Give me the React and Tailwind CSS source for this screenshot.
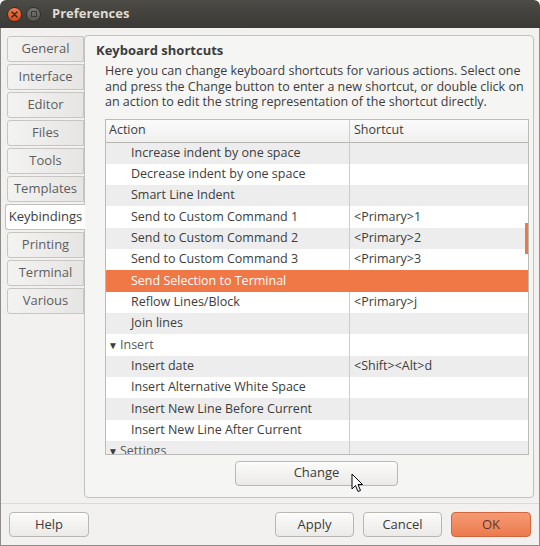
import React from "react";

const tabs = ["General", "Interface", "Editor", "Files", "Tools", "Templates", "Keybindings", "Printing", "Terminal", "Various"];

const rows = [
    { a: "Increase indent by one space", s: "" },
    { a: "Decrease indent by one space", s: "" },
    { a: "Smart Line Indent", s: "" },
    { a: "Send to Custom Command 1", s: "<Primary>1" },
    { a: "Send to Custom Command 2", s: "<Primary>2" },
    { a: "Send to Custom Command 3", s: "<Primary>3" },
    { a: "Send Selection to Terminal", s: "", selected: true },
    { a: "Reflow Lines/Block", s: "<Primary>j" },
    { a: "Join lines", s: "" },
    { a: "Insert", s: "", group: true },
    { a: "Insert date", s: "<Shift><Alt>d" },
    { a: "Insert Alternative White Space", s: "" },
    { a: "Insert New Line Before Current", s: "" },
    { a: "Insert New Line After Current", s: "" },
    { a: "Settings", s: "", group: true },
];

function Button({ children, className = "" }) {
    return (
        <button
            className={
                "h-[25px] rounded-[4px] border border-[#b9b7b3] bg-gradient-to-b from-[#fbfbfa] to-[#ebeae8] text-[13px] text-[#3c3c3c] shadow-[inset_0_1px_0_#fff] " +
                className
            }
        >
            {children}
        </button>
    );
}

export default function App() {
    return (
        <div
            className="w-[540px] h-[546px] flex flex-col bg-white overflow-hidden"
            style={{ fontFamily: '"Open Sans", "Noto Sans", sans-serif' }}
        >
            {/* Title bar */}
            <div className="h-[28px] shrink-0 flex items-center rounded-t-[6px] bg-gradient-to-b from-[#4c4b46] to-[#3a3935] px-[7px]">
                <div className="w-[15px] h-[15px] rounded-full bg-gradient-to-b from-[#f37b4c] to-[#d8491b] border border-[#2e2d2a] flex items-center justify-center">
                    <svg width="7" height="7" viewBox="0 0 7 7">
                        <path d="M1 1 L6 6 M6 1 L1 6" stroke="#3a2a22" strokeWidth="1.6" strokeLinecap="round" />
                    </svg>
                </div>
                <div className="ml-[4px] w-[15px] h-[15px] rounded-full bg-gradient-to-b from-[#7a7974] to-[#55544f] border border-[#2e2d2a] flex items-center justify-center">
                    <div className="w-[6px] h-[6px] border border-[#3a3935]" />
                </div>
                <span className="ml-[11px] text-[13px] font-bold text-[#dfdbd2]">Preferences</span>
            </div>

            {/* Body */}
            <div className="flex-1 flex flex-col bg-[#f2f1f0] border-x border-b border-[#8d8c88]">
                <div className="flex pt-[7px] pr-[5px]">
                    {/* Tabs */}
                    <div className="w-[83px] shrink-0 flex flex-col gap-[2px] pt-[1px] pl-[4px] relative z-10">
                        {tabs.map((t) =>
                            t === "Keybindings" ? (
                                <div
                                    key={t}
                                    className="h-[26px] w-[80px] -mr-[1px] flex items-center justify-center rounded-l-[3px] border border-r-0 border-[#c3c1bd] bg-white text-[13px] text-[#3c3c3c]"
                                >
                                    {t}
                                </div>
                            ) : (
                                <div
                                    key={t}
                                    className="h-[26px] ml-[2px] w-[77px] flex items-center justify-center rounded-l-[3px] border border-[#c8c6c2] bg-gradient-to-r from-[#f3f3f2] to-[#e6e5e3] text-[13px] text-[#5e5e5e]"
                                >
                                    {t}
                                </div>
                            )
                        )}
                    </div>

                    {/* Panel */}
                    <div className="flex-1 h-[463px] rounded-[4px] border border-[#c3c1bd] bg-[#f5f5f4] pl-[11px] pr-[4px] flex flex-col">
                        <div className="pt-[5px] text-[13px] font-bold text-[#3c3c3c] leading-[18px]">Keyboard shortcuts</div>
                        <p className="mt-[4px] ml-[9px] text-[12.5px] leading-[15.5px] text-[#3c3c3c]">
                            Here you can change keyboard shortcuts for various actions. Select one and press the Change button to enter a new shortcut, or double click on an action to edit the string representation of the shortcut directly.
                        </p>

                        {/* Table */}
                        <div className="mt-[9px] ml-[9px] h-[336px] border border-[#bdbbb7] bg-white overflow-hidden relative">
                            <div className="h-[23px] flex border-b border-[#b9b7b3] bg-gradient-to-b from-[#fbfbfb] to-[#f0f0ef] text-[12.5px] text-[#3c3c3c]">
                                <div className="w-[244px] pl-[3px] flex items-center border-r border-[#cfcdc9]">Action</div>
                                <div className="flex-1 pl-[4px] flex items-center">Shortcut</div>
                            </div>
                            {rows.map((r, i) => {
                                const bg = r.selected ? "bg-[#f07746] text-white" : i % 2 === 0 ? "bg-[#ededed] text-[#3c3c3c]" : "bg-white text-[#3c3c3c]";
                                return (
                                    <div key={r.a} className={"h-[21.33px] flex text-[12.5px] " + bg}>
                                        <div className={"w-[244px] flex items-center border-r " + (r.selected ? "border-[#f07746]" : "border-[#cfcdc9]")}>
                                            {r.group ? (
                                                <>
                                                    <span className="ml-[2px] w-[12px] text-[10px] text-[#3c3c3c]">▼</span>
                                                    <span className="text-[#5a5a5a]">{r.a}</span>
                                                </>
                                            ) : (
                                                <span className="ml-[25px]">{r.a}</span>
                                            )}
                                        </div>
                                        <div className="flex-1 pl-[4px] flex items-center">{r.s}</div>
                                    </div>
                                );
                            })}
                            {/* scrollbar thumb */}
                            <div className="absolute right-[0px] top-[103px] w-[3px] h-[31px] bg-[#e8794b]" />
                        </div>

                        <div className="mt-[6px] flex pl-[139px]">
                            <Button className="w-[163px]">Change</Button>
                        </div>
                    </div>
                </div>

                {/* Separator */}
                <div className="mt-[5px] border-t border-[#dcdad6]" />

                {/* Bottom buttons */}
                <div className="mt-[8px] flex px-[8px]">
                    <Button className="w-[80px]">Help</Button>
                    <div className="flex-1" />
                    <Button className="w-[79px]">Apply</Button>
                    <Button className="ml-[9px] w-[79px]">Cancel</Button>
                    <button className="ml-[9px] w-[80px] h-[25px] rounded-[4px] border border-[#d0663d] bg-gradient-to-b from-[#f59a74] to-[#ec7a4d] text-[13px] text-[#5a3a2e]">
                        OK
                    </button>
                </div>
            </div>

            {/* Mouse cursor */}
            <svg className="absolute left-[351px] top-[473px]" width="13" height="21" viewBox="0 0 13 21">
                <path d="M1 1 L1 16 L4.5 12.5 L7 18.5 L9.5 17.5 L7 11.5 L11.5 11.5 Z" fill="#fff" stroke="#000" strokeWidth="1" strokeLinejoin="round" />
            </svg>
        </div>
    );
}
